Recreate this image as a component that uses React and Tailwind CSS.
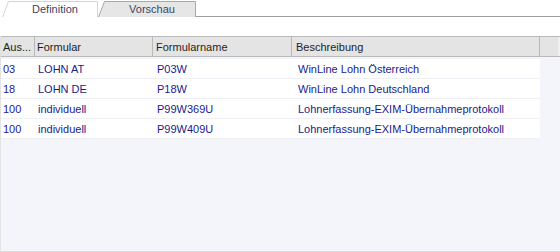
const rows = [
  { aus: '03', formular: 'LOHN AT', name: 'P03W', desc: 'WinLine Lohn Österreich' },
  { aus: '18', formular: 'LOHN DE', name: 'P18W', desc: 'WinLine Lohn Deutschland' },
  { aus: '100', formular: 'individuell', name: 'P99W369U', desc: 'Lohnerfassung-EXIM-Übernahmeprotokoll' },
  { aus: '100', formular: 'individuell', name: 'P99W409U', desc: 'Lohnerfassung-EXIM-Übernahmeprotokoll' },
];

function Tab({ label, active, width }) {
  return (
    <div className="relative h-[17px] flex items-center justify-center" style={{ width }}>
      <svg className="absolute inset-0" width={width} height="17" viewBox={`0 0 ${width} 17`}>
        <path
          d={`M0.5 17 L6.5 1.5 L${width - 0.5} 1.5 L${width - 0.5} 17`}
          fill={active ? '#ffffff' : '#e6e6e6'}
          stroke={active ? '#d4d4d4' : '#a8a8a8'}
          strokeWidth="1"
        />
      </svg>
      <span className="relative pl-[10px] text-[11px] leading-none text-[#3b4566] pt-[2px]">{label}</span>
    </div>
  );
}

export default function App() {
  return (
    <div className="w-[560px] h-[252px] bg-white flex flex-col font-['Liberation_Sans',Arial,sans-serif] overflow-hidden">
      <div className="flex h-[17px] pl-[2px]">
        <Tab label="Definition" active width={96} />
        <Tab label="Vorschau" width={98} />
        <div className="flex-1 border-b border-[#a0a0a0]" />
      </div>
      <div className="flex-1 flex flex-col border-l border-[#e2e2e2] mt-[19px] bg-[#f4f5fa] border-b border-b-[#dcdcdc]">
        <div className="flex h-[21px] bg-[#e4e4e4] text-[11px] text-[#1e1e1e] border-t border-b border-[#b9b9b9]">
          <div className="w-[34px] pl-[2px] pt-[1px] flex items-center border-r border-[#b9b9b9]">Aus...</div>
          <div className="w-[118px] pl-[2px] pt-[1px] flex items-center border-r border-[#b9b9b9]">Formular</div>
          <div className="w-[139px] pl-[3px] pt-[1px] flex items-center border-r border-[#b9b9b9]">Formularname</div>
          <div className="w-[248px] pl-[4px] pt-[1px] flex items-center border-r border-[#b9b9b9]">Beschreibung</div>
          <div className="w-[18px]" />
          <div className="flex-1 bg-[#f0f0f0]" />
        </div>
        <div className="flex flex-col w-[539px] mt-[2px]">
          {rows.map((r, i) => (
            <div key={i} className="flex h-[20px] pt-[1px] bg-white border-b border-[#eef0f5] text-[11px] text-[#1b1b8a] items-center">
              <div className="w-[35px] pl-[2px]">{r.aus}</div>
              <div className="w-[118px] pl-[2px]">{r.formular}</div>
              <div className="w-[140px] pl-[3px]">{r.name}</div>
              <div className="flex-1 pl-[4px]">{r.desc}</div>
            </div>
          ))}
        </div>
      </div>
    </div>
  );
}
